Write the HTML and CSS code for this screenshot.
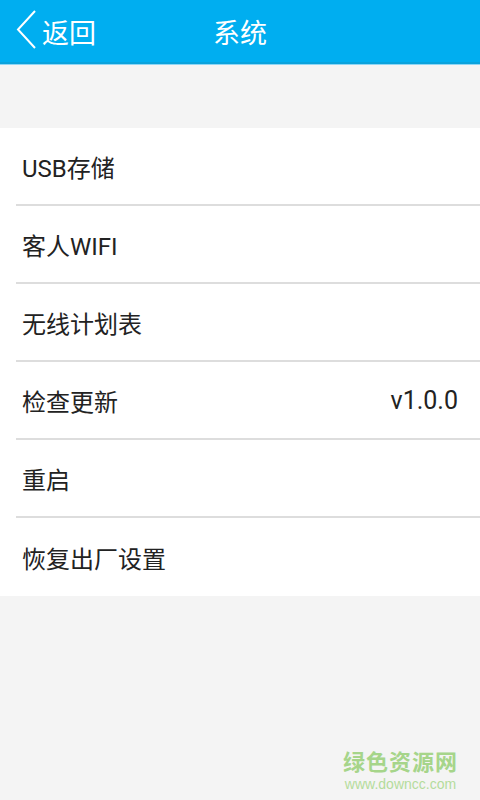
FILE: index.html
```html
<!DOCTYPE html>
<html lang="zh-CN">
<head>
    <meta charset="UTF-8">
    <meta name="viewport" content="width=device-width, initial-scale=1.0">
    <title>系统</title>
    <link rel="stylesheet" href="styles.css">
</head>
<body>
    <!-- Top bar -->
    <div class="topbar">
        <div class="back">
            <svg class="back-arrow" width="22" height="40" viewBox="0 0 22 40">
                <polyline points="20,1 3,19.5 20,38" fill="none" stroke="#ffffff" stroke-width="2"/>
            </svg>
            <span>返回</span>
        </div>
        <div class="title">系统</div>
    </div>

    <!-- Settings list -->
    <div class="list">
        <div class="item"><span>USB存储</span></div>
        <div class="item"><span>客人WIFI</span></div>
        <div class="item"><span>无线计划表</span></div>
        <div class="item"><span>检查更新</span><span class="value">v1.0.0</span></div>
        <div class="item"><span>重启</span></div>
        <div class="item"><span>恢复出厂设置</span></div>
    </div>

    <div class="watermark">
        <div class="wm-name">绿色资源网</div>
        <div class="wm-url">www.downcc.com</div>
    </div>
</body>
</html>
```

FILE: styles.css
```css
body {
    margin: 0;
    width: 480px;
    height: 800px;
    background-color: #f4f4f4;
    font-family: Roboto, "Noto Sans CJK SC", sans-serif;
    position: relative;
    overflow: hidden;
}

.topbar {
    height: 62px;
    background-color: #00aef0;
    border-bottom: 2px solid #0aa2dc;
    box-shadow: 0 1px 0 #8fd6f5;
    position: relative;
    display: flex;
    align-items: center;
    color: #ffffff;
}

.back {
    display: flex;
    align-items: center;
    padding-left: 15px;
    font-size: 27px;
}

.back-arrow {
    margin-right: 5px;
    margin-top: -2px;
}

.title {
    position: absolute;
    left: 0;
    right: 0;
    text-align: center;
    font-size: 27px;
    pointer-events: none;
}

.list {
    margin-top: 64px;
    background-color: #ffffff;
}

.item {
    height: 76px;
    margin-left: 16px;
    padding: 0 22px 0 6px;
    border-bottom: 2px solid #dddddd;
    display: flex;
    align-items: center;
    justify-content: space-between;
    font-size: 24px;
    color: #222222;
}

.item:last-child {
    border-bottom: none;
    height: 78px;
}

.value {
    font-size: 25px;
    color: #222222;
}

/* Site watermark */
.watermark {
    position: absolute;
    right: 22px;
    bottom: 8px;
    text-align: center;
    color: #a6d58a;
}

.wm-name {
    font-size: 22px;
    font-weight: bold;
    letter-spacing: 1px;
}

.wm-url {
    font-family: "Liberation Sans", sans-serif;
    font-size: 14px;
    color: #b4dc9c;
}
```
